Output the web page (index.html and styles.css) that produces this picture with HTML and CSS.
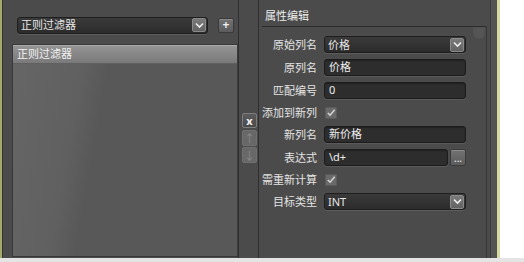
FILE: index.html
```html
<!DOCTYPE html>
<html>
<head>
<meta charset="utf-8">
<link rel="stylesheet" href="styles.css">
</head>
<body>
<div class="app">
  <div class="edge"></div>
  <div class="left">
    <div class="toprow">
      <div class="combo filter">
        <span class="val">正则过滤器</span>
        <span class="drop"><svg width="9" height="7" viewBox="0 0 9 7"><path d="M1 1.5 L4.5 5 L8 1.5" fill="none" stroke="#eee" stroke-width="1.6"/></svg></span>
      </div>
      <div class="sbtn plus">+</div>
    </div>
    <div class="list">
      <div class="item sel">正则过滤器</div>
    </div>
  </div>
  <div class="tools">
    <div class="tbtn del">x</div>
    <div class="tbtn dis">↑</div>
    <div class="tbtn dis">↓</div>
  </div>
  <div class="right">
    <div class="title">属性编辑</div>
    <div class="box">
      <div class="form">
        <div class="lbl">原始列名</div>
        <div class="combo"><span class="val">价格</span><span class="drop"><svg width="9" height="7" viewBox="0 0 9 7"><path d="M1 1.5 L4.5 5 L8 1.5" fill="none" stroke="#eee" stroke-width="1.6"/></svg></span></div>
        <div class="lbl">原列名</div>
        <div class="input">价格</div>
        <div class="lbl">匹配编号</div>
        <div class="input">0</div>
        <div class="lbl ck">添加到新列</div>
        <div class="ckrow"><span class="check"><svg width="11" height="10" viewBox="0 0 11 10"><path d="M2 5 L4.5 7.5 L9.5 1.5" fill="none" stroke="#d8d8d8" stroke-width="1.6"/></svg></span></div>
        <div class="lbl">新列名</div>
        <div class="input">新价格</div>
        <div class="lbl">表达式</div>
        <div class="exprow"><div class="input grow">\d+</div><div class="sbtn dots">...</div></div>
        <div class="lbl ck">需重新计算</div>
        <div class="ckrow"><span class="check"><svg width="11" height="10" viewBox="0 0 11 10"><path d="M2 5 L4.5 7.5 L9.5 1.5" fill="none" stroke="#d8d8d8" stroke-width="1.6"/></svg></span></div>
        <div class="lbl">目标类型</div>
        <div class="combo"><span class="val">INT</span><span class="drop"><svg width="9" height="7" viewBox="0 0 9 7"><path d="M1 1.5 L4.5 5 L8 1.5" fill="none" stroke="#eee" stroke-width="1.6"/></svg></span></div>
      </div>
      <div class="scroll"><div class="thumb"></div></div>
    </div>
  </div>
  <div class="side"></div>
  <div class="yellow"></div>
  <div class="white"></div>
</div>
<div class="bottom"></div>
</body>
</html>
```

FILE: styles.css
```css
* { box-sizing: border-box; }
html, body { margin: 0; padding: 0; background: #e6e6e6; }
body {
  width: 524px;
  height: 262px;
  overflow: hidden;
  font-family: "Noto Sans", "Noto Sans CJK SC", sans-serif;
  font-size: 11px;
  color: #e6e6e6;
}
.app {
  display: flex;
  height: 258px;
  background: #4b4b4b;
}
.edge {
  width: 3px;
  background: linear-gradient(to right, #a4aa6c 0 2px, #363636 2px 3px);
}
.left {
  width: 235px;
  display: flex;
  flex-direction: column;
  padding: 17px 0 1px 9px;
}
.toprow {
  display: flex;
  align-items: center;
  gap: 10px;
  padding-left: 5px;
  height: 16px;
}
.combo {
  display: flex;
  align-items: center;
  justify-content: space-between;
  height: 17px;
  background: linear-gradient(#3a3a3a, #2b2b2b);
  border: 1px solid #1e1e1e;
  border-radius: 3px;
  box-shadow: 0 1px 0 #5c5c5c;
  padding: 0 1px 0 3px;
  line-height: 14px;
}
.combo.filter { width: 191px; }
.val { white-space: nowrap; }
.drop {
  width: 14px;
  height: 14px;
  display: flex;
  align-items: center;
  justify-content: center;
  background: linear-gradient(#7a7a7a, #626262);
  border: 1px solid #8a8a8a;
  border-radius: 2px;
}
.sbtn {
  display: flex;
  align-items: center;
  justify-content: center;
  background: linear-gradient(#727272, #5c5c5c);
  border: 1px solid #3a3a3a;
  border-radius: 2px;
  box-shadow: inset 0 1px 0 #8a8a8a;
  color: #f0f0f0;
}
.plus { width: 16px; height: 15px; font-size: 12px; line-height: 12px; font-weight: bold; }
.list {
  margin-top: 11px;
  width: 226px;
  flex: 1;
  border: 1px solid #383838;
  border-right-color: #3c3c3c;
  background: linear-gradient(100deg, #666 0%, #606060 28%, #585858 38%, #585858 100%);
}
.item {
  height: 19px;
  line-height: 18px;
  padding-left: 4px;
  color: #f2f2f2;
}
.item.sel {
  background: linear-gradient(#959595, #7a7a7a);
  border-bottom: 1px solid #606060;
  box-shadow: inset 0 1px 0 #aaa;
}
.tools {
  width: 21px;
  border-left: 1px solid #2f2f2f;
  border-right: 1px solid #2f2f2f;
  padding: 113px 0 0 3px;
  display: flex;
  flex-direction: column;
  gap: 1px;
}
.tbtn {
  width: 15px;
  height: 16px;
  display: flex;
  align-items: center;
  justify-content: center;
  border-radius: 2px;
  font-size: 11px;
  line-height: 11px;
}
.tbtn.del {
  background: linear-gradient(#5c5c5c, #4a4a4a);
  border: 1px solid #7c7c7c;
  color: #f4f4f4;
  font-weight: bold;
  height: 15px;
  margin-bottom: 1px;
}
.tbtn.dis {
  background: #686868;
  border: 1px solid #707070;
  color: #8a8a8a;
}
.right {
  width: 231px;
  display: flex;
  flex-direction: column;
  padding-left: 3px;
}
.title {
  height: 27px;
  padding: 9px 0 0 3px;
  line-height: 13px;
  color: #eee;
}
.box {
  flex: 1;
  display: flex;
  border-top: 1px solid #2c2c2c;
  border-right: 1px solid #363636;
  width: 225px;
  margin-top: -1px;
}
.form {
  flex: 1;
  display: grid;
  grid-template-columns: 56px 142px;
  grid-template-rows: 17px 17px 17px 15px 17px 17px 15px 17px;
  column-gap: 7px;
  row-gap: 6px;
  padding-top: 9px;
  margin-left: -1px;
  align-items: center;
}
.lbl {
  text-align: right;
  white-space: nowrap;
  color: #e4e4e4;
  line-height: 14px;
}
.input {
  height: 17px;
  background: #2d2d2d;
  border: 1px solid #1c1c1c;
  border-radius: 3px;
  box-shadow: 0 1px 0 #5a5a5a, inset 0 1px 1px #222;
  padding-left: 4px;
  line-height: 14px;
  color: #eee;
}
.exprow { display: flex; gap: 2px; align-items: center; }
.grow { flex: 1; }
.dots { width: 16px; height: 17px; font-size: 10px; line-height: 8px; align-items: flex-end; padding-bottom: 3px; }
.ckrow { display: flex; align-items: center; }
.check {
  width: 12px;
  height: 12px;
  margin-left: 1px;
  display: flex;
  align-items: center;
  justify-content: center;
  background: #6a6a6a;
  border: 1px solid #5a5a5a;
  border-radius: 1px;
}
.scroll {
  width: 12px;
  margin-right: 1px;
  padding-top: 0;
}
.thumb {
  height: 12px;
  border-radius: 0 0 5px 5px;
  background: #555;
  border: 1px solid #505050;
}
.side {
  width: 7px;
  background: #535353;
  border-left: 1px solid #3a3a3a;
}
.yellow { width: 3px; background: #d8d8a2; }
.white { flex: 1; background: #fff; }
.bottom { height: 4px; background: #e4e4e4; }
```
